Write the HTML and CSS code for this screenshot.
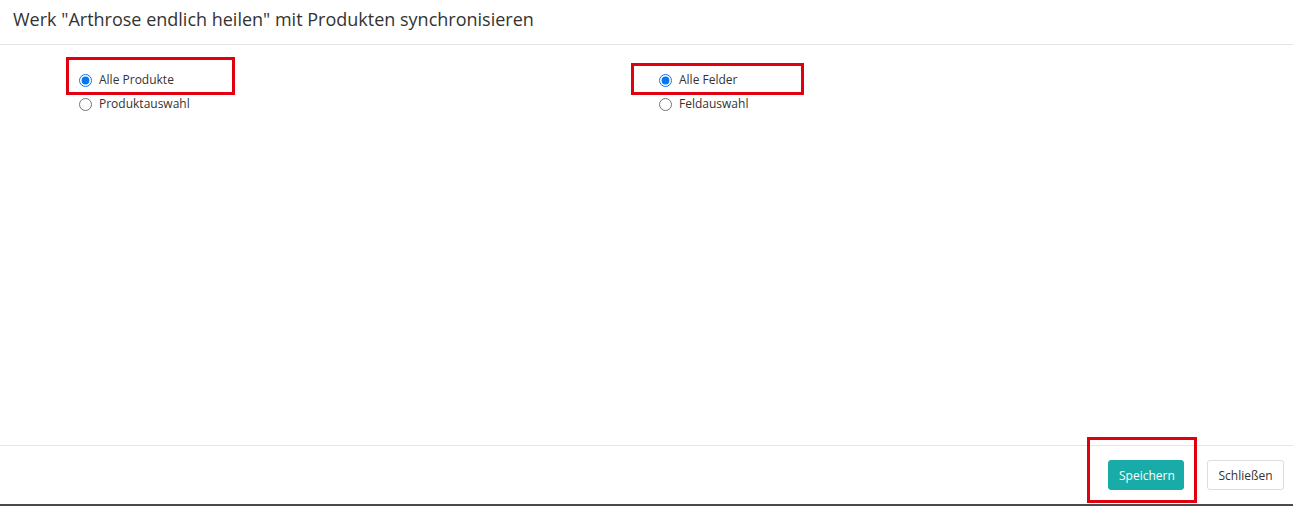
FILE: index.html
```html
<!DOCTYPE html>
<html lang="de">
<head>
    <meta charset="UTF-8">
    <title>Werk synchronisieren</title>
    <link rel="stylesheet" href="styles.css">
</head>
<body>
    <div class="modal">
        <div class="modal-header">
            <h4 class="modal-title">Werk "Arthrose endlich heilen" mit Produkten synchronisieren</h4>
        </div>

        <div class="modal-body">
            <div class="option-group group-left">
                <span class="mark mark-products"></span>
                <label class="option"><input type="radio" name="products" checked> Alle Produkte</label>
                <label class="option"><input type="radio" name="products"> Produktauswahl</label>
            </div>
            <div class="option-group group-right">
                <span class="mark mark-fields"></span>
                <label class="option"><input type="radio" name="fields" checked> Alle Felder</label>
                <label class="option"><input type="radio" name="fields"> Feldauswahl</label>
            </div>
        </div>

        <div class="modal-footer">
            <div class="save-wrap">
                <span class="mark mark-save"></span>
                <button class="btn btn-primary">Speichern</button>
            </div>
            <button class="btn btn-default">Schließen</button>
        </div>
    </div>
</body>
</html>
```

FILE: styles.css
```css
* {
    box-sizing: border-box;
}
html, body {
    margin: 0;
    padding: 0;
    background: #fff;
}
body {
    font-family: 'Open Sans', 'Noto Sans', sans-serif;
    color: #333;
    font-size: 12px;
}
.modal {
    width: 1293px;
    height: 506px;
    border-bottom: 2px solid #4a4a4a;
}
.modal-header {
    height: 45px;
    padding: 7px 13px 0;
    border-bottom: 1px solid #e5e5e5;
}
.modal-title {
    margin: 0;
    font-size: 18px;
    font-weight: 400;
    line-height: 24px;
    color: #333;
}
.modal-body {
    height: 400px;
    position: relative;
    display: grid;
    grid-template-columns: 580px 1fr;
    padding: 23px 0 0 79px;
    align-items: start;
}
.option-group {
    position: relative;
    display: flex;
    flex-direction: column;
}
.option {
    display: flex;
    align-items: center;
    height: 24px;
    line-height: 24px;
    font-size: 12px;
    color: #333;
    cursor: pointer;
    width: max-content;
}
.option input {
    width: 13px;
    height: 13px;
    margin: 0 7px 0 0;
    accent-color: #0a75f0;
}
.mark {
    position: absolute;
    border: 3px solid #e0000f;
    pointer-events: none;
}
.mark-products {
    left: -13px;
    top: -11px;
    width: 169px;
    height: 38px;
}
.mark-fields {
    left: -28px;
    top: -5px;
    width: 173px;
    height: 32px;
}
.modal-footer {
    height: 59px;
    border-top: 1px solid #e5e5e5;
    display: flex;
    justify-content: flex-end;
    align-items: flex-start;
    padding: 14px 9px 0 0;
    gap: 23px;
}
.save-wrap {
    position: relative;
}
.mark-save {
    left: -21px;
    top: -23px;
    width: 110px;
    height: 66px;
}
.btn {
    height: 30px;
    padding: 0 10px;
    font-family: 'Open Sans', 'Noto Sans', sans-serif;
    font-size: 12px;
    border-radius: 3px;
    cursor: pointer;
}
.btn-primary {
    width: 76px;
    background: #18aba7;
    border: 1px solid #18aba7;
    color: #fff;
}
.btn-default {
    width: 77px;
    background: #fff;
    border: 1px solid #ddd;
    color: #333;
}
```
